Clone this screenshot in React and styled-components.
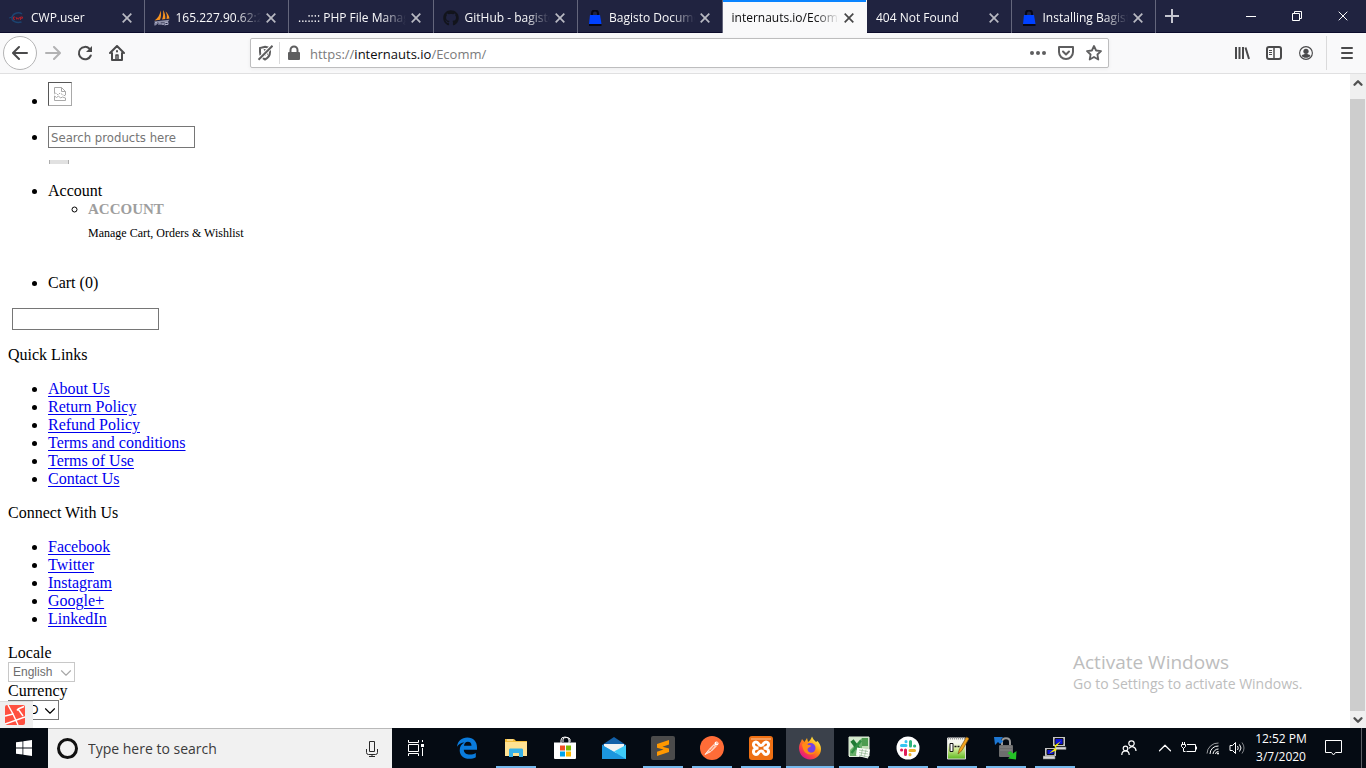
import React from 'react';
import styled, { createGlobalStyle } from 'styled-components';
import {
    ChevronDown,
    ChevronUp,
} from 'lucide-react';
import { FaGithub } from 'react-icons/fa';

const uiFont = '"Open Sans", "Noto Sans", sans-serif';

//
const GlobalStyle = createGlobalStyle`
    * {
        box-sizing: border-box;
    }

    body {
        margin: 0;
        background: #fff;
        color: #000;
        font: 16px/18px "Liberation Serif", "Times New Roman", serif;
    }

    button {
        margin: 0;
        padding: 0;
        border: 0;
        background: none;
        color: inherit;
        font: inherit;
    }

    svg {
        display: block;
        flex: none;
    }
`;

//
const Desktop = styled.div`
    position: relative;
    display: flex;
    flex-direction: column;
    height: 100vh;
    overflow: hidden;
`;

// 分頁列
const TabStrip = styled.header`
    display: flex;
    flex: none;
    height: 33px;
    background: #202340;
    border-bottom: 1px solid #0c0c2c;
    color: #f9f9fa;
    font-family: ${uiFont};
    font-size: 12px;
    line-height: 16px;
`;

const Tabs = styled.div`
    display: flex;
    flex: 1;
    min-width: 0;
`;

const TabItem = styled.div`
    display: flex;
    flex: 1 1 0;
    align-items: center;
    gap: 6px;
    min-width: 0;
    height: 33px;
    padding: 2px 7px 0 9px;
    border-right: 1px solid ${({ $active }) => ($active ? '#f9f9fa' : '#64667c')};
    background: ${({ $active }) => ($active ? '#f9f9fa' : 'transparent')};
    box-shadow: ${({ $active }) => ($active ? 'inset 0 2px #0a84ff' : 'none')};
    color: ${({ $active }) => ($active ? '#0c0c0d' : 'inherit')};
`;

const TabTitle = styled.span`
    flex: 1;
    overflow: hidden;
    white-space: nowrap;
    mask-image: linear-gradient(to left, transparent, #000 24px);
`;

const TabClose = styled.button`
    display: grid;
    place-items: center;
    width: 20px;
    height: 20px;
    margin-left: -6px;
    opacity: ${({ $active }) => ($active ? 0.75 : 0.7)};
`;

const NewTab = styled.button`
    display: grid;
    place-items: center;
    width: 32px;
    margin-right: 40px;
    color: #c5c6d0;
`;

const WindowButton = styled.button`
    display: grid;
    place-items: center;
    width: 46px;
`;

// 工具列
const Toolbar = styled.nav`
    display: flex;
    flex: none;
    align-items: center;
    height: 41px;
    padding: 0 3px;
    background: #f9f9fa;
    border-bottom: 1px solid #e0e0e1;
    color: #4a4a4b;
`;

const ToolButton = styled.button`
    display: grid;
    place-items: center;
    width: 32px;
    height: 32px;
    opacity: ${({ $faded }) => ($faded ? 0.4 : 1)};
`;

const BackButton = styled(ToolButton)`
    width: 34px;
    height: 34px;
    border: 1px solid #b4b4b5;
    border-radius: 50%;
    background: #fff;
`;

const UrlBar = styled.div`
    display: flex;
    flex: 1;
    align-items: center;
    height: 30px;
    margin: 0 117px;
    border: 1px solid #bdbdbe;
    border-radius: 2px;
    background: #fff;
    box-shadow: 0 1px 4px rgba(0, 0, 0, 0.06);
`;

const UrlButton = styled(ToolButton)`
    width: 28px;
    height: 28px;
    color: #5e5e5f;
`;

const Address = styled.div`
    flex: 1;
    padding: 2px 0 0 2px;
    color: #7b7b7c;
    font-family: ${uiFont};
    font-size: 13px;

    b {
        color: #0c0c0d;
        font-weight: 400;
    }
`;

const Divider = styled.span`
    width: 1px;
    height: ${({ $tall }) => ($tall ? '34px' : '22px')};
    margin: ${({ $tall }) => ($tall ? '0 4px' : '0')};
    background: #dadadb;
`;

// 網頁內容
const Viewport = styled.div`
    position: relative;
    display: flex;
    flex: 1;
    min-height: 0;
`;

const Page = styled.main`
    flex: 1;
    padding: 8px;
    overflow: hidden;

    p {
        margin: 16px 0;
    }
`;

const HeaderList = styled.ul`
    margin: 0 0 16px;
    padding-left: 40px;

    > li + li {
        margin-top: 16px;
    }
`;

const AccountMenu = styled.ul`
    padding: 0 0 16px 40px;

    h4 {
        margin: 0;
        color: #9e9e9e;
        font-size: 15px;
        line-height: 18px;
    }

    div {
        margin-top: 6px;
        font-size: 12px;
    }
`;

const BrokenImage = styled.span`
    display: inline-block;
    width: 24px;
    height: 24px;
    padding: 4px 5px;
    border: 1px solid;
    border-color: #575757 #a9a9a9 #a9a9a9 #575757;
`;

const TextInput = styled.input`
    width: 147px;
    height: 22px;
    padding: 1px 2px;
    border: 1px solid #767676;
    background: #fff;
    font-family: "DejaVu Sans Condensed", "Noto Sans", sans-serif;
    font-size: 13px;

    &::placeholder {
        color: #757575;
    }
`;

const FormRow = styled.div`
    display: flex;
    padding-left: 4px;
`;

const SearchSubmit = styled.button`
    display: block;
    width: 20px;
    height: 4px;
    margin: 12px 0 18px 1px;
    border: solid #adadad;
    border-width: 0 1px;
    background: #e1e1e1;
`;

const LinkList = styled.ul`
    margin: 16px 0;
    padding-left: 40px;

    a {
        color: #00e;
        text-underline-offset: 2px;
    }
`;

const Field = styled.div`
    label {
        display: block;
    }
`;

const SelectWrap = styled.div`
    position: relative;
    display: flex;
    width: ${({ $width }) => $width};
    height: 20px;
    color: ${({ $disabled }) => ($disabled ? '#6d6d6d' : '#000')};

    svg {
        position: absolute;
        top: 2px;
        right: 0;
        opacity: ${({ $disabled }) => ($disabled ? 0.6 : 1)};
        pointer-events: none;
    }
`;

const Select = styled.select`
    appearance: none;
    width: 100%;
    padding: 0 4px;
    border: 1px solid #767676;
    border-radius: 0;
    background: #fff;
    color: inherit;
    font-family: "Liberation Sans", Arial, sans-serif;
    font-size: 12px;

    &:disabled {
        border-color: #c8c8c8;
        opacity: 1;
    }
`;

// 左下角 debugbar
const DebugBar = styled.button`
    position: absolute;
    left: 0;
    bottom: 0;
    display: grid;
    place-items: center;
    width: 33px;
    height: 27px;
    padding-right: 3px;
    border-top: 1px solid #ddd;
    background: #efefef;
`;

const ScrollTrack = styled.div`
    display: flex;
    flex-direction: column;
    width: 16px;
    background: #f0f0f0;
    color: #505050;

    button {
        display: grid;
        place-items: center;
        height: 17px;
    }
`;

const ScrollThumb = styled.div`
    flex: 1;
    margin: 8px 1px 0 0;
    background: #cdcdcd;
`;

const Watermark = styled.aside`
    position: absolute;
    right: 57px;
    bottom: 73px;
    width: 236px;
    color: #bdbdbd;
    font-family: ${uiFont};
    font-size: 14px;
    line-height: 22px;
    white-space: nowrap;
    pointer-events: none;

    strong {
        display: block;
        font-size: 19px;
        font-weight: 400;
    }
`;

// 工作列
const Taskbar = styled.footer`
    display: flex;
    flex: none;
    height: 40px;
    background: #050b13;
    color: #fff;
    font-family: ${uiFont};
`;

const TaskButton = styled.button`
    position: relative;
    display: grid;
    place-items: center;
    flex: none;
    width: 48px;
    height: 40px;
    background: ${({ $active }) => ($active ? '#3b414b' : 'none')};

    &::after {
        content: '';
        position: absolute;
        bottom: 0;
        left: ${({ $active }) => ($active ? '0' : '4px')};
        right: ${({ $active }) => ($active ? '0' : '4px')};
        height: 2px;
        background: ${({ $running }) => ($running ? '#76b9ed' : 'transparent')};
    }
`;

const TaskSearch = styled.label`
    display: flex;
    align-items: center;
    width: 344px;
    gap: 9px;
    padding: 0 12px 0 8px;
    border-top: 1px solid #b9b9b9;
    background: #f1f1f1;
    color: #2b2b2b;

    input {
        flex: 1;
        min-width: 0;
        padding: 0;
        border: 0;
        outline: 0;
        background: none;
        font-family: ${uiFont};
        font-size: 14px;
    }

    input::placeholder {
        color: #3b3b3b;
    }
`;

const Apps = styled.div`
    display: flex;
    flex: 1;
    gap: 1px;
    margin-left: 3px;
`;

const Tray = styled.div`
    display: flex;
    align-items: center;
`;

const TrayButton = styled.button`
    display: grid;
    place-items: center;
    width: ${({ $wide }) => ($wide ? '48px' : '24px')};
    height: 40px;
`;

const Clock = styled.time`
    width: 56px;
    margin-left: 4px;
    font-size: 12px;
    line-height: 18px;
    text-align: center;
    white-space: nowrap;
`;

const ShowDesktop = styled.button`
    width: 5px;
    height: 40px;
    margin-left: 4px;
    border-left: 1px solid #5c6066;
`;

//
const CloseIcon = ({ size = 10, stroke = 1.7 }) => (
    <svg width={size} height={size} viewBox="0 0 10 10" stroke="currentColor" strokeWidth={stroke}>
        <path d="M.7.7l8.6 8.6M9.3.7L.7 9.3" />
    </svg>
);

const CwpIcon = () => (
    <svg width="16" height="16" viewBox="0 0 16 16" fill="none">
        <path d="M13 4C9.500 1.500 3.500 3 3 8c-.2 3 4 5.500 9.500 4" stroke="#1c4470" strokeWidth="1.500" />
        <path d="M0 8l3-1" stroke="#1c4470" />
        <path d="M6 7H4.500v2.300H6M7 7l.8 2.300.9-1.500.9 1.500.9-2.300M11.500 10V7h2v1.300h-2" stroke="#a8202c" />
    </svg>
);

const SailIcon = () => (
    <svg width="16" height="16" viewBox="0 0 16 16">
        <path d="M6.500.5C6 5 4 8 .5 10.500l5.500-.8C7.200 7 7.300 4 6.500.5zM9 0c.5 4 .2 7-1 9.500l3.300-.5C11.500 6 11 3 9 0zM11.500 1.500c1.500 2.500 1.700 5 1 7.500l3-.5c-.5-3-2-5.500-4-7z" fill="#f79320" />
        <path d="M0 11.500l15.500-1.700-2 2.700H1.500z" fill="#8d8fa8" />
        <path d="M1 15.500v-3h2v1.500H1M5 12v3m0-2h2v2m1-2l1 2 1-2M11 15.500v-3h3v2h-3" fill="none" stroke="#a9abc4" />
    </svg>
);

const BagIcon = () => (
    <svg width="16" height="16" viewBox="0 0 16 16">
        <path d="M5 6V3.500a3 3 0 0 1 6 0V6" fill="none" stroke="#060714" strokeWidth="2" />
        <path d="M3 5h10l1.500 9H2z" fill="#0041ff" />
        <path d="M2 14h12.500v2H2z" fill="#060714" />
    </svg>
);

const LaravelIcon = () => (
    <svg width="20" height="20" viewBox="0 0 20 20">
        <rect width="20" height="20" rx="2" fill="#ff5040" />
        <path d="M0 11l8-2L3 0M8 9l5 11M0 19l20-7M13 4l6-2.500M13 4l5 7M13 4l-1 1.500" fill="none" stroke="#fff" strokeWidth="1.400" />
    </svg>
);

// 工作列圖示
const EdgeIcon = () => (
    <svg width="22" height="22" viewBox="0 0 22 22" fill="#0a7bdc">
        <path d="M1 9.700C1.700 4 5.700.5 11.300.5c6 0 9.700 4 9.700 9.700v2.500H7.800c.2 3.300 2.700 4.900 6.200 4.900 2.200 0 4.100-.6 5.800-1.600v4.300c-1.800 1-4.100 1.500-6.600 1.500-5.700 0-9.500-3.300-9.500-8.600 0-3.400 1.700-6.200 4.900-7.600C5 5.800 2.700 7.200 1 9.700zm7-.9h7.500c0-2.500-1.300-4-3.600-4-2.200 0-3.600 1.600-3.900 4z" />
    </svg>
);

const FolderIcon = () => (
    <svg width="22" height="20" viewBox="0 0 22 20">
        <path d="M0 1h9l2 2h11v15H0z" fill="#f3bd3d" />
        <path d="M0 4h22v14H0z" fill="#ffe292" />
        <path d="M4 19v-7c0-1 .6-1.500 1.500-1.500h11c1 0 1.500.5 1.500 1.500v7h-4v-4H8v4z" fill="#37b2e8" />
        <path d="M2 2h6" stroke="#fff3ce" />
    </svg>
);

const StoreIcon = () => (
    <svg width="24" height="24" viewBox="0 0 24 24">
        <path d="M8 7V4a4 3 0 0 1 8 0v3M10 6V3a4 3 0 0 1 7 0v3" fill="none" stroke="#fff" />
        <path d="M1 6.500h22V22a1 1 0 0 1-1 1H2a1 1 0 0 1-1-1z" fill="#fff" />
        <path d="M7 9.500h5v5H7z" fill="#f25022" />
        <path d="M13 9.500h5v5h-5z" fill="#7fba00" />
        <path d="M7 15.500h5v5H7z" fill="#00a4ef" />
        <path d="M13 15.500h5v5h-5z" fill="#ffb900" />
    </svg>
);

const MailIcon = () => (
    <svg width="24" height="24" viewBox="0 0 24 24">
        <path d="M0 9l12-8 12 8v4H0z" fill="#1360a8" />
        <path d="M2 8h20v6l-10 4L2 12z" fill="#f2f2f2" />
        <path d="M0 9l14 8L24 9v14H0z" fill="#32b4f1" />
        <path d="M0 9l24 14H0z" fill="#1c96df" />
        <path d="M12 15.500L24 9v14z" fill="#3ecbf8" />
    </svg>
);

const SublimeIcon = () => (
    <svg width="24" height="24" viewBox="0 0 24 24">
        <rect width="24" height="24" rx="2" fill="#4b4b4b" />
        <path d="M6 8l12-4v4.500l-6.500 2.200L18 12.500V16L6 20v-4.300l6.500-2.200L6 11.700z" fill="#ff9800" />
    </svg>
);

const PostmanIcon = () => (
    <svg width="24" height="24" viewBox="0 0 24 24">
        <circle cx="12" cy="12" r="12" fill="#ff6c37" />
        <path d="M5 18.500l4-5 5-5 2 2-5 5z" fill="#ffc2a8" stroke="#fff" strokeWidth=".8" />
        <path d="M9 13.500l2 2M10 15l4-5" stroke="#ff6c37" strokeWidth=".7" />
        <circle cx="16.500" cy="7.500" r="2" fill="#fff" />
        <circle cx="17" cy="7" r=".7" fill="#ff6c37" />
    </svg>
);

const XamppIcon = () => (
    <svg width="24" height="24" viewBox="0 0 24 24">
        <rect width="24" height="24" rx="3" fill="#ee7014" />
        <path d="M2 2h20v2H2z" fill="#f69b59" />
        <path d="M9.500 12C3 12 3.500 6 7 6c3 0 2 3.500 5 3.500S14 6 17 6c3.500 0 4 6-2.500 6 6.500 0 6 6.500 2.500 6.500-3 0-2-3.500-5-3.500s-2 3.500-5 3.500C3.500 18.500 3 12 9.500 12z" fill="none" stroke="#fff" strokeWidth="3" />
    </svg>
);

const FirefoxIcon = () => (
    <svg width="24" height="24" viewBox="0 0 24 24">
        <defs>
            <linearGradient id="fox" x1=".85" y1=".1" x2=".2" y2=".9">
                <stop offset="0" stopColor="#fff44f" />
                <stop offset=".4" stopColor="#ff980e" />
                <stop offset=".7" stopColor="#ff4b3a" />
                <stop offset="1" stopColor="#e31587" />
            </linearGradient>
        </defs>
        <path d="M1 12c0-3 1-5 2-6.500L4 3l2.500 3L9 2l1 4c2-1 3-3 4-5.500 1 2.500 2.500 4 4 5.500l1.500-1c2 2 3.500 5 3.500 8 0 6-5 10.500-11 10.500S1 18.500 1 12z" fill="url(#fox)" />
        <circle cx="12.500" cy="12" r="5" fill="#7542e5" />
        <path d="M4 8c3-2 5-1 6 1 2 0 3 .3 3 1-1 1.500-3 1-3.500 3.500C10 17 15 18 18 15c-1 4-9 5-12 0-1-2-2-5-2-7z" fill="#ff8a16" />
    </svg>
);

const ExcelIcon = () => (
    <svg width="24" height="24" viewBox="0 0 24 24">
        <path d="M2 1h20v19H2z" fill="#bfdcb4" stroke="#e4f1df" />
        <path d="M3 2h12v18H3z" fill="#6bb06b" />
        <path d="M15 2h6v8h-6z" fill="#4d9c50" />
        <path d="M3 2h12L3 14z" fill="#d6ead0" />
        <path d="M5 4.500l9 12" stroke="#1f7a34" strokeWidth="4" />
        <path d="M14 4.500L4.500 17" stroke="#2f8f43" strokeWidth="2.500" />
        <path d="M10 11.500l13 2-2 9-12-3z" fill="#fbfdfa" />
        <path d="M12 14l9 1.500M12 16.500l9 1.500M12 19l9 2M15.500 13l-1.500 7M19 13.500l-1.500 7" stroke="#8fb691" strokeWidth=".7" />
        <path d="M2 20.500h10" stroke="#e4f1df" />
    </svg>
);

const SlackIcon = () => (
    <svg width="24" height="24" viewBox="0 0 24 24" strokeWidth="3" strokeLinecap="round">
        <circle cx="12" cy="12" r="11.500" fill="#fff" />
        <path d="M5.500 9.500H10M10 5.500v.2" stroke="#36c5f0" />
        <path d="M14.500 5.500V10M18.500 10h.2" stroke="#2eb67d" />
        <path d="M18.500 14.500H14M14 18.500v.2" stroke="#ecb22e" />
        <path d="M9.500 18.500V14M5.500 14h.2" stroke="#e01e5a" />
    </svg>
);

const NotepadIcon = () => (
    <svg width="24" height="24" viewBox="0 0 24 24">
        <defs>
            <linearGradient id="note" x1="0" y1="0" x2="0" y2="1">
                <stop offset=".25" stopColor="#f4f6ee" />
                <stop offset=".5" stopColor="#d4ec9c" />
                <stop offset="1" stopColor="#5cb81c" />
            </linearGradient>
        </defs>
        <path d="M2.500 2h18v21h-18z" fill="url(#note)" stroke="#d8d8d8" />
        <path d="M3 2.500h17" stroke="#999" strokeWidth="2" strokeDasharray="1 1" />
        <path d="M5 7.500h3v8H5z" fill="#fff" stroke="#111" />
        <path d="M9.500 10.500h2M12.500 10.500h2" stroke="#111" strokeWidth="1.500" />
        <path d="M13 18l1.500-5 7-12 2.500 1.500-7 12z" fill="#f4a41c" stroke="#7a5312" strokeWidth=".7" />
    </svg>
);

const WinScpIcon = () => (
    <svg width="24" height="24" viewBox="0 0 24 24">
        <path d="M8 10V6c0-5 8-5 8 0v4" fill="none" stroke="#999" strokeWidth="2" />
        <rect x="5" y="9" width="14" height="12" rx="1" fill="#6d6d6d" />
        <path d="M6 11h12M6 14h12" stroke="#878787" />
        <path d="M0 1h9L7 3.500l2 2L6 8 4 6 1 9z" fill="#1d77d3" />
        <path d="M22 23.500l-8-1 2.500-2.500-3-3 2.500-2 3 2.500 3.500-2.500z" fill="#24c326" />
    </svg>
);

const PuttyIcon = () => (
    <svg width="24" height="24" viewBox="0 0 24 24">
        <path d="M10 1h12v9H10zM2 12h11v8H2z" fill="#c4c4c4" />
        <path d="M12 2.500h8v6h-8zM4 13.500h7v5H4z" fill="#0c12d8" stroke="#111" />
        <path d="M12 11h11v2.500H12zM0 20h12v3H0z" fill="#d8d8d8" stroke="#777" strokeWidth=".6" />
        <path d="M18 5l-7 5 2 1.500-7 6 8-3.500-2-2z" fill="#fff200" />
    </svg>
);

//
const tabs = [
    { title: 'CWP.user', icon: <CwpIcon /> },
    { title: '165.227.90.62:20', icon: <SailIcon /> },
    { title: '...:::: PHP File Manag' },
    { title: 'GitHub - bagisto', icon: <FaGithub size={16} color="#12141c" /> },
    { title: 'Bagisto Docume', icon: <BagIcon /> },
    { title: 'internauts.io/Ecomm', active: true },
    { title: '404 Not Found' },
    { title: 'Installing Bagist', icon: <BagIcon /> },
];

const quickLinks = [
    'About Us',
    'Return Policy',
    'Refund Policy',
    'Terms and conditions',
    'Terms of Use',
    'Contact Us',
];

const socialLinks = ['Facebook', 'Twitter', 'Instagram', 'Google+', 'LinkedIn'];

const apps = [
    { name: 'Edge', icon: <EdgeIcon /> },
    { name: 'File Explorer', icon: <FolderIcon />, running: true },
    { name: 'Store', icon: <StoreIcon /> },
    { name: 'Mail', icon: <MailIcon /> },
    { name: 'Sublime Text', icon: <SublimeIcon />, running: true },
    { name: 'Postman', icon: <PostmanIcon />, running: true },
    { name: 'XAMPP', icon: <XamppIcon />, running: true },
    { name: 'Firefox', icon: <FirefoxIcon />, running: true, active: true },
    { name: 'Excel', icon: <ExcelIcon />, running: true },
    { name: 'Slack', icon: <SlackIcon />, running: true },
    { name: 'Notepad++', icon: <NotepadIcon />, running: true },
    { name: 'WinSCP', icon: <WinScpIcon />, running: true },
    { name: 'PuTTY', icon: <PuttyIcon />, running: true },
];

// 視窗上方
const BrowserTabs = () => (
    <TabStrip>
        <Tabs>
            {
                tabs.map(({ title, icon, active }) => (
                    <TabItem key={title} $active={active}>
                        {icon}
                        <TabTitle>{title}</TabTitle>
                        <TabClose aria-label={`Close ${title}`} $active={active}><CloseIcon /></TabClose>
                    </TabItem>
                ))
            }
        </Tabs>
        <NewTab aria-label="New tab">
            <svg width="14" height="14" viewBox="0 0 14 14" stroke="currentColor" strokeWidth="2"><path d="M7 0v14M0 7h14" /></svg>
        </NewTab>
        <WindowButton aria-label="Minimize">
            <svg width="10" height="10" viewBox="0 0 10 10" stroke="#fff"><path d="M0 5.500h10" /></svg>
        </WindowButton>
        <WindowButton aria-label="Restore">
            <svg width="10" height="10" viewBox="0 0 10 10" fill="none" stroke="#fff"><path d="M.5 2.500h7v7h-7zM2.500 2.500v-2h7v7h-2" /></svg>
        </WindowButton>
        <WindowButton aria-label="Close window"><CloseIcon stroke={1} /></WindowButton>
    </TabStrip>
);

const BrowserToolbar = () => (
    <Toolbar>
        <BackButton aria-label="Back">
            <svg width="16" height="16" viewBox="0 0 16 16" fill="none" stroke="currentColor" strokeWidth="2" strokeLinecap="round" strokeLinejoin="round"><path d="M15 8H1.500M7 2L1 8l6 6" /></svg>
        </BackButton>
        <ToolButton aria-label="Forward" $faded>
            <svg width="16" height="16" viewBox="0 0 16 16" fill="none" stroke="currentColor" strokeWidth="2" strokeLinecap="round" strokeLinejoin="round"><path d="M1 8h13.500M9 2l6 6-6 6" /></svg>
        </ToolButton>
        <ToolButton aria-label="Reload">
            <svg width="16" height="16" viewBox="0 0 16 16" fill="none" stroke="currentColor" strokeWidth="2" strokeLinecap="round">
                <path d="M13.800 10.500A6.200 6.200 0 1 1 12.500 3.700L14 5.500" />
                <path d="M15 1v6H9z" fill="currentColor" stroke="none" />
            </svg>
        </ToolButton>
        <ToolButton aria-label="Home">
            <svg width="16" height="16" viewBox="0 0 16 16" fill="none" stroke="currentColor" strokeWidth="2" strokeLinejoin="round" strokeLinecap="round">
                <path d="M1 8l7-7 7 7M3 8v7h10V8" />
                <path d="M7 14v-4h2v4" strokeWidth="1.500" />
                <path d="M8 6v.5" />
            </svg>
        </ToolButton>
        <UrlBar>
            <UrlButton aria-label="Tracking protection">
                <svg width="16" height="16" viewBox="0 0 16 16" fill="none" stroke="currentColor" strokeWidth="2">
                    <path d="M8 1.800L13 3v4c0 3.500-2 6-5 7.500C5 13 3 10.500 3 7V3z" />
                    <path d="M8 5v6M8 5l2 .5V8z" strokeWidth="1.500" />
                    <path d="M15 1L1.500 15" stroke="#fff" strokeWidth="4" />
                    <path d="M15.500.8L1.500 14.800" />
                </svg>
            </UrlButton>
            <Divider />
            <UrlButton aria-label="Site information">
                <svg width="16" height="16" viewBox="0 0 16 16">
                    <path d="M4.500 8V5a3.500 3.500 0 0 1 7 0v3" fill="none" stroke="currentColor" strokeWidth="2" />
                    <rect x="2" y="7" width="12" height="8" rx="1" fill="currentColor" />
                </svg>
            </UrlButton>
            <Address>https://<b>internauts.io</b>/Ecomm/</Address>
            <UrlButton aria-label="Page actions">
                <svg width="16" height="16" viewBox="0 0 16 16" fill="currentColor"><circle cx="2" cy="8" r="2" /><circle cx="8" cy="8" r="2" /><circle cx="14" cy="8" r="2" /></svg>
            </UrlButton>
            <UrlButton aria-label="Save to Pocket">
                <svg width="16" height="16" viewBox="0 0 16 16" fill="none" stroke="currentColor" strokeWidth="2" strokeLinecap="round" strokeLinejoin="round"><path d="M1 2h14v5a7 7 0 0 1-14 0zM5 6.500l3 3 3-3" /></svg>
            </UrlButton>
            <UrlButton aria-label="Bookmark">
                <svg width="16" height="16" viewBox="0 0 16 16" fill="none" stroke="currentColor" strokeWidth="1.800" strokeLinejoin="round"><path d="M8 1l2.100 4.500 4.900.6-3.600 3.400.9 5L8 12l-4.300 2.500.9-5L1 6.100l4.900-.6z" /></svg>
            </UrlButton>
        </UrlBar>
        <ToolButton aria-label="Library">
            <svg width="16" height="16" viewBox="0 0 16 16" stroke="currentColor" strokeWidth="2"><path d="M2 2v12M5.500 2v12M9 2v12M11.500 2.500l3.500 11.500" /></svg>
        </ToolButton>
        <ToolButton aria-label="Sidebars">
            <svg width="16" height="16" viewBox="0 0 16 16" fill="none" stroke="currentColor" strokeWidth="2"><rect x="1" y="2" width="14" height="12" rx="2" /><path d="M8 2v12" strokeWidth="1.500" /><path d="M3 5.500h3M3 7.500h3M3 9.500h3" strokeWidth="1" /></svg>
        </ToolButton>
        <ToolButton aria-label="Account">
            <svg width="14" height="14" viewBox="0 0 16 16" fill="currentColor"><circle cx="8" cy="8" r="7.300" fill="none" stroke="currentColor" strokeWidth="1.300" /><circle cx="8" cy="6" r="3" /><path d="M3 11c2-2.300 8-2.300 10 0-2 3.300-8 3.300-10 0z" /></svg>
        </ToolButton>
        <Divider $tall />
        <ToolButton aria-label="Menu">
            <svg width="12" height="12" viewBox="0 0 12 12" stroke="currentColor" strokeWidth="2" strokeLinecap="round"><path d="M1 1h10M1 6h10M1 11h10" /></svg>
        </ToolButton>
    </Toolbar>
);

// 連結清單
const Links = ({ title, items }) => (
    <>
        <p>{title}</p>
        <LinkList>
            {items.map((name) => <li key={name}><a href="#">{name}</a></li>)}
        </LinkList>
    </>
);

const SelectField = ({ id, label, value, width, disabled }) => (
    <Field>
        <label htmlFor={id}>{label}</label>
        <SelectWrap $width={width} $disabled={disabled}>
            <Select id={id} defaultValue={value} disabled={disabled}>
                <option>{value}</option>
            </Select>
            <ChevronDown size={18} strokeWidth={1.500} />
        </SelectWrap>
    </Field>
);

const StorePage = () => (
    <Page>
        <HeaderList>
            <li>
                <BrokenImage role="img" aria-label="Logo">
                    <svg width="12" height="14" viewBox="0 0 12 14" fill="none" stroke="#a9a9a9">
                        <path d="M.5 6V.5h7l4 4V8M7.500.5v4h4" />
                        <path d="M0 7l2-1 2 2 2-2 3 2 3 1" strokeDasharray="2 1" />
                        <path d="M.5 13.500V9l2 1.500 2-1.500 2 2 2-1 3 1v2.500z" />
                    </svg>
                </BrokenImage>
            </li>
            <li>
                <TextInput type="search" aria-label="Search products here" placeholder="Search products here" />
                <SearchSubmit aria-label="Search" />
            </li>
            <li>
                Account
                <AccountMenu>
                    <li>
                        <h4>ACCOUNT</h4>
                        <div>Manage Cart, Orders &amp; Wishlist</div>
                    </li>
                </AccountMenu>
            </li>
            <li>Cart (0)</li>
        </HeaderList>
        <FormRow>
            <TextInput type="text" aria-label="Search" />
        </FormRow>
        <Links title="Quick Links" items={quickLinks} />
        <Links title="Connect With Us" items={socialLinks} />
        <SelectField id="locale" label="Locale" value="English" width="67px" disabled />
        <SelectField id="currency" label="Currency" value="USD" width="51px" />
    </Page>
);

const WindowsTaskbar = () => (
    <Taskbar>
        <TaskButton aria-label="Start">
            <svg width="16" height="16" viewBox="0 0 16 16" fill="#fff"><path d="M0 2.300L6.500 1.400v6.200H0zM7.300 1.300L16 0v7.600H7.300zM0 8.400h6.500v6.200L0 13.700zM7.300 8.400H16V16l-8.700-1.300z" /></svg>
        </TaskButton>
        <TaskSearch>
            <svg width="23" height="23" viewBox="0 0 23 23" fill="none" stroke="#111" strokeWidth="3"><circle cx="11.500" cy="11.500" r="9" /></svg>
            <input type="text" aria-label="Type here to search" placeholder="Type here to search" />
            <svg width="16" height="18" viewBox="0 0 16 18" fill="none" stroke="currentColor"><path d="M5.500 1.500h5v10h-5zM2.500 9v3.500a2 2 0 0 0 2 2h7a2 2 0 0 0 2-2V9M8 14.500V17M5 16.500h6" /></svg>
        </TaskSearch>
        <TaskButton aria-label="Task view">
            <svg width="18" height="16" viewBox="0 0 18 16" fill="none" stroke="#fff"><path d="M1.500 0v2.500h10V0M1.500 16v-2.500h10V16M1.500 4.500h10v7h-10zM15.500 0v2M15.500 8v8" /><path d="M14 4h3v3h-3z" fill="#fff" stroke="none" /></svg>
        </TaskButton>
        <Apps>
            {
                apps.map(({ name, icon, running, active }) => (
                    <TaskButton key={name} aria-label={name} $running={running} $active={active}>{icon}</TaskButton>
                ))
            }
        </Apps>
        <Tray>
            <TrayButton aria-label="People" $wide>
                <svg width="16" height="16" viewBox="0 0 16 16" fill="none" stroke="#fff" strokeWidth="1.200"><circle cx="10.500" cy="3.500" r="2.700" /><circle cx="4.500" cy="8.500" r="2.300" /><path d="M.8 15c0-5.500 7.400-5.500 7.400 0M8 8.500c2-3.300 7-2 7 2.500" /></svg>
            </TrayButton>
            <TrayButton aria-label="Show hidden icons"><ChevronUp size={22} strokeWidth={1.300} /></TrayButton>
            <TrayButton aria-label="Battery">
                <svg width="18" height="14" viewBox="0 0 18 14" fill="none" stroke="#fff"><path d="M7 3.500h8.500v7h-9M16.500 5.500v3M2.500 1v3M4.500 1v3M1.500 3.500h4v2l-2 2-2-2zM3.500 7v3.500h2" /></svg>
            </TrayButton>
            <TrayButton aria-label="Network">
                <svg width="14" height="14" viewBox="0 0 14 14" fill="none" stroke="#fff"><path d="M1 12.500A11 11 0 0 1 12.500 2" opacity=".6" /><path d="M4 13a8 8 0 0 1 8.500-8M7 13a5.500 5.500 0 0 1 5.500-5M9.500 13a3 3 0 0 1 3-2.500" /><circle cx="12" cy="12.500" r="1" fill="#fff" stroke="none" /></svg>
            </TrayButton>
            <TrayButton aria-label="Volume">
                <svg width="17" height="14" viewBox="0 0 17 14" fill="none" stroke="#fff"><path d="M1 4.500h2.500l3-3v11l-3-3H1zM8.500 5q1.500 2 0 4M10.500 3.500q3 3.500 0 7" /><path d="M13 1.500q4 5.500 0 11" opacity=".5" /></svg>
            </TrayButton>
            <Clock>
                12:52 PM
                <br />
                3/7/2020
            </Clock>
            <TrayButton aria-label="Notifications" $wide>
                <svg width="17" height="16" viewBox="0 0 17 16" fill="none" stroke="#fff"><path d="M.5.5h16v12h-6l-2 2.500-2-2.500h-6z" /></svg>
            </TrayButton>
            <ShowDesktop aria-label="Show desktop" />
        </Tray>
    </Taskbar>
);

const App = () => (
    <Desktop>
        <GlobalStyle />
        <BrowserTabs />
        <BrowserToolbar />
        <Viewport>
            <StorePage />
            <ScrollTrack>
                <button type="button" aria-label="Scroll up"><ChevronUp size={14} strokeWidth={4} /></button>
                <ScrollThumb />
                <button type="button" aria-label="Scroll down"><ChevronDown size={14} strokeWidth={4} /></button>
            </ScrollTrack>
            <DebugBar aria-label="Debug bar"><LaravelIcon /></DebugBar>
        </Viewport>
        <Watermark>
            <strong>Activate Windows</strong>
            Go to Settings to activate Windows.
        </Watermark>
        <WindowsTaskbar />
    </Desktop>
);

export default App;
